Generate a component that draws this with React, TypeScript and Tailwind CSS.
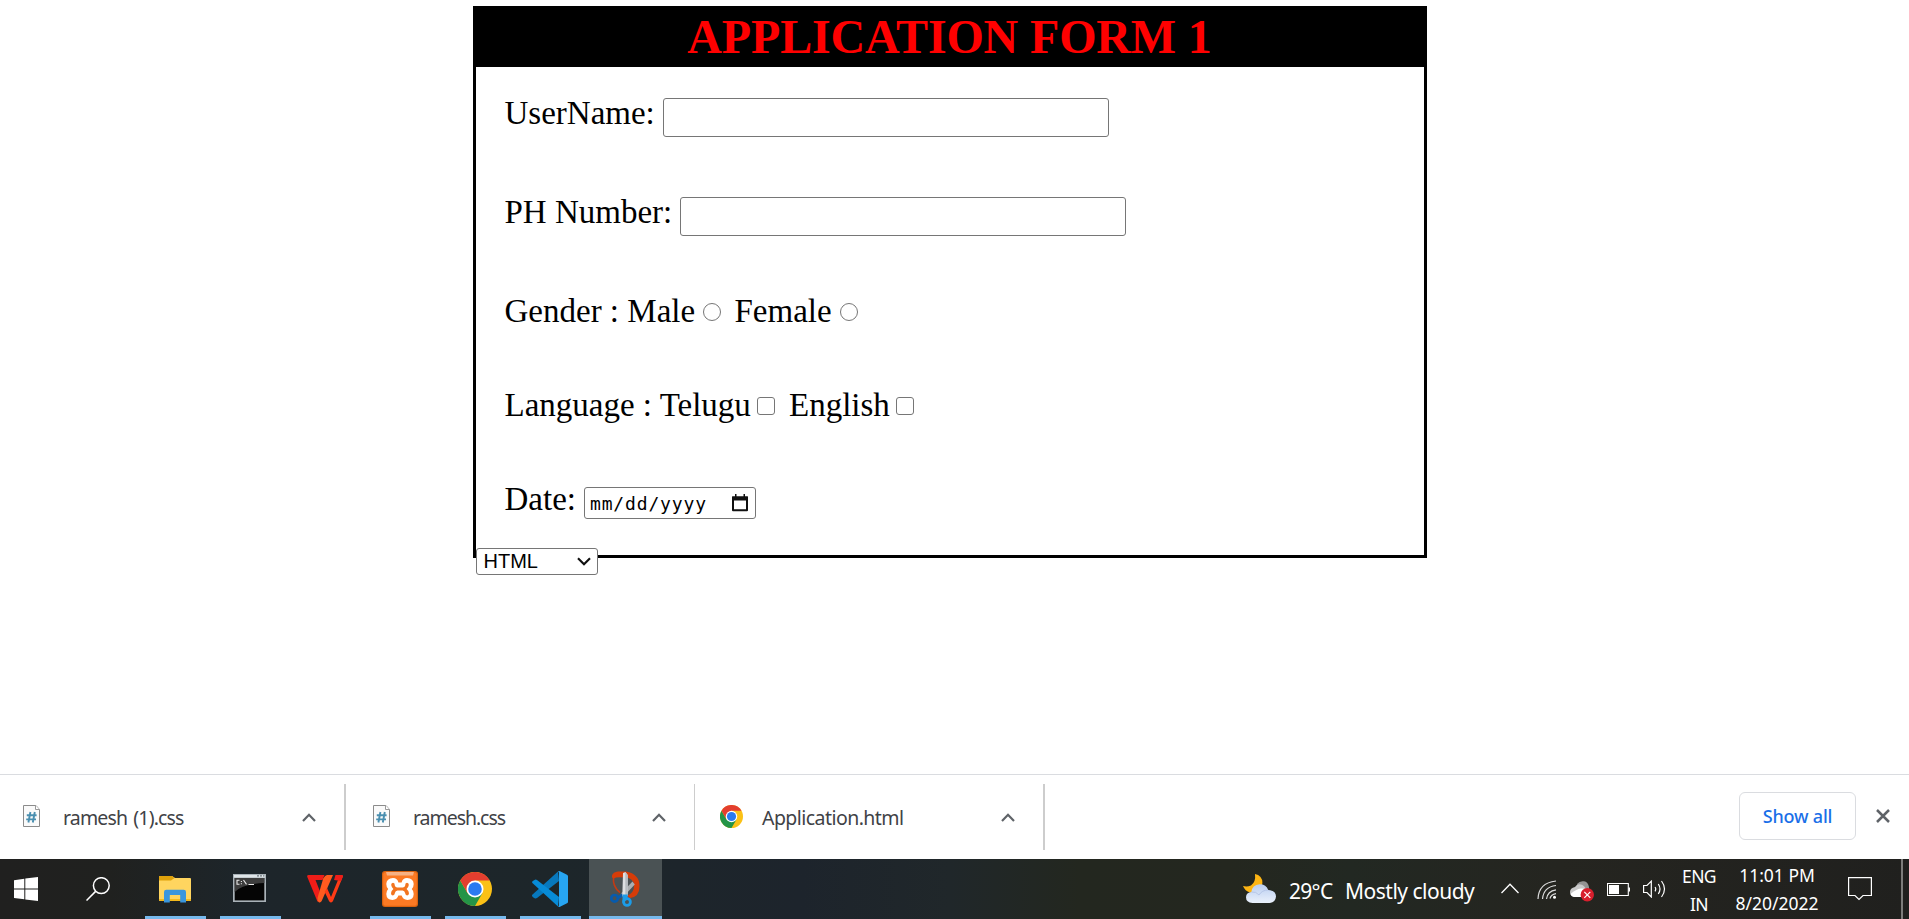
import type { ReactNode } from "react";

function ChromeLogo({ className }: { className: string }) {
  return (
    <svg viewBox="0 0 48 48" className={className}>
      <circle cx="24" cy="24" r="24" fill="#fbc116" />
      <path d="M3.2 12A24 24 0 0 0 24 48L34.4 30H13.6Z" fill="#249447" />
      <path d="M3.2 12A24 24 0 0 1 44.8 12H24L13.6 30Z" fill="#e33e2f" />
      <circle cx="24" cy="24" r="12" fill="#fff" />
      <circle cx="24" cy="24" r="9.6" fill="#2a7af0" />
    </svg>
  );
}

function CssFileIcon() {
  return (
    <svg viewBox="0 0 17 22" className="h-[22px] w-[17px]">
      <path d="M.5.5H13L16.5 4.5V21.5H.5Z" fill="#fafafa" stroke="#8b8b8b" />
      <path d="M12.5.5V4.5H16.5" fill="#fff" stroke="#9a9a9a" />
      <path d="M7.4 7L5.4 17.5M11.8 7L9.8 17.5M3.8 10.2H13.6M3.2 14.4H13" stroke="#4a8fb0" strokeWidth="1.9" fill="none" />
    </svg>
  );
}

function Download({ icon, name, width, spacing }: { icon: ReactNode; name: string; width: string; spacing: string }) {
  return (
    <div className={`flex h-[66px] items-start border-[#cdcdcd] ${width}`}>
      <div className="mt-[21px] flex w-[40px] shrink-0">{icon}</div>
      <span className={`mt-[20px] grow whitespace-nowrap font-['Noto_Sans',sans-serif] text-[19.5px] leading-[28px] text-[#3f4246] ${spacing}`}>{name}</span>
      <svg viewBox="0 0 14 9" className="mt-[29px] mr-[28px] h-[9px] w-[14px] shrink-0">
        <path d="M1 8L7 1.8L13 8" fill="none" stroke="#5f6368" strokeWidth="2.2" />
      </svg>
    </div>
  );
}

function TaskCell({ children, open }: { children: ReactNode; open?: boolean }) {
  return (
    <div className="flex h-[60px] w-[75px] flex-col items-center justify-between">
      <div className="flex h-[57px] items-center pr-[2px]">{children}</div>
      {open && <div className="h-[3px] w-[61px] bg-[#76b9ed]" />}
    </div>
  );
}

function TextField({ className }: { className: string }) {
  return <input type="text" className={`h-[39px] w-[446px] rounded-[3px] border border-[#767676] bg-white ${className}`} />;
}

export default function App() {
  return (
    <div className="flex h-[919px] w-[1909px] flex-col overflow-hidden bg-white text-black">
      <main className="h-[774px] pt-[6px] pl-[473px]">
        <form className="h-[552px] w-[954px] border-[3px] border-black font-['Liberation_Serif',serif] text-[33px] leading-[40px]">
          <h1 className="flex h-[58px] justify-center bg-black pr-[1px] text-[48px] leading-[55px] font-bold tracking-[-0.15px] whitespace-nowrap text-[#ff0000]">
            APPLICATION FORM 1
          </h1>
          <div className="flex flex-col pt-[26px] pl-[28.5px]">
            <div className="flex h-[99px] items-start">
              <span className="w-[158.5px]">UserName:</span>
              <TextField className="mt-[5px]" />
            </div>
            <div className="flex h-[99px] items-start">
              <span className="w-[175.5px] whitespace-nowrap">PH Number:</span>
              <TextField className="mt-[5px]" />
            </div>
            <div className="flex h-[94px] items-start">
              <span className="w-[198.5px] whitespace-pre">Gender : Male</span>
              <input type="radio" name="gender" className="mt-[12px] h-[18px] w-[18px] appearance-none rounded-full border-[1.5px] border-[#767676]" />
              <span className="ml-[13.5px] w-[105.5px]">Female</span>
              <input type="radio" name="gender" className="mt-[12px] h-[18px] w-[18px] appearance-none rounded-full border-[1.5px] border-[#767676]" />
            </div>
            <div className="flex h-[94px] items-start">
              <span className="w-[252.5px] whitespace-pre">Language : Telugu</span>
              <input type="checkbox" className="mt-[12px] h-[18px] w-[18px] appearance-none rounded-[3px] border-[1.5px] border-[#767676]" />
              <span className="ml-[14px] w-[107px]">English</span>
              <input type="checkbox" className="mt-[12px] h-[18px] w-[18px] appearance-none rounded-[3px] border-[1.5px] border-[#767676]" />
            </div>
            <div className="flex items-start">
              <span className="w-[79.5px]">Date:</span>
              <div className="mt-[8px] flex h-[32px] w-[172px] items-center justify-between rounded-[3px] border border-[#767676] pr-[7px] pl-[5px]">
                <span className="pt-[1px] font-['DejaVu_Sans_Mono',monospace] text-[18px] leading-[30px] tracking-[0.85px]">mm/dd/yyyy</span>
                <svg viewBox="0 0 16 18" className="mb-[1px] h-[18px] w-[16px]">
                  <path d="M1 3.5H15V16.2H1Z" fill="none" stroke="#111" strokeWidth="2" strokeLinejoin="round" />
                  <path d="M0 2.5H16V6.5H0ZM3 0H4.5V3H3ZM11.5 0H13V3H11.5Z" fill="#111" />
                </svg>
              </div>
            </div>
          </div>
        </form>
        <div className="relative mt-[-10px] ml-[3px] flex h-[27px] w-[122px] items-center justify-between rounded-[3px] border border-[#767676] bg-white pr-[6px] pl-[6.5px]">
          <span className="font-['Liberation_Sans',sans-serif] text-[20px] leading-[25px]">HTML</span>
          <svg viewBox="0 0 14 9" className="h-[9px] w-[14px]">
            <path d="M1 1.3L7 7.2L13 1.3" fill="none" stroke="#111" strokeWidth="2.2" />
          </svg>
        </div>
      </main>

      <section className="flex h-[85px] border-t border-[#dadce0] pt-[9px]">
        <Download icon={<CssFileIcon />} name="ramesh (1).css" width="w-[346px] border-r-2 pl-[23px]" spacing="tracking-[-0.85px] [word-spacing:2px]" />
        <Download icon={<CssFileIcon />} name="ramesh.css" width="w-[349px] border-r pl-[27px]" spacing="tracking-[-1.05px]" />
        <Download icon={<ChromeLogo className="ml-[0.5px] h-[23px] w-[23px]" />} name="Application.html" width="w-[350px] border-r-2 pl-[24px]" spacing="pl-[3px] tracking-[-0.55px]" />
        <button className="mt-[8px] ml-[694px] h-[48px] w-[117px] rounded-[6px] border border-[#dadce0] font-['Noto_Sans',sans-serif] text-[18px] leading-[46px] font-medium tracking-[-0.2px] whitespace-nowrap text-[#1a6fe8]">
          Show all
        </button>
        <svg viewBox="0 0 14 14" className="mt-[25px] ml-[20px] h-[14px] w-[14px]">
          <path d="M1 1L13 13M13 1L1 13" stroke="#5f6368" strokeWidth="2.5" />
        </svg>
      </section>

      <footer className="flex h-[60px] bg-[linear-gradient(90deg,#20201f_0px,#20211f_110px,#1d252a_240px,#1d262a_560px,#1d242c_800px,#20272a_950px,#23271f_1080px,#24271f_1230px,#222822_1350px,#252520_1560px,#20201e_1909px)] font-['Noto_Sans',sans-serif] text-white">
        <div className="flex w-[58px] pt-[18px] pl-[14px]">
          <svg viewBox="0 0 24 24" className="h-[24px] w-[24px]" fill="#fff">
            <path d="M0 3.2L10.3 1.8V11.4H0ZM11.3 1.6L24 0V11.4H11.3ZM0 12.5H10.3V22.3L0 21ZM11.3 12.5H24V24L11.3 22.4Z" />
          </svg>
        </div>
        <div className="flex w-[80px] justify-center pt-[18px]">
          <svg viewBox="0 0 24 24" className="h-[24px] w-[24px]" fill="none" stroke="#fff" strokeWidth="1.5">
            <circle cx="15.3" cy="8.6" r="7.9" />
            <path d="M9.6 14.4L.5 23.5" />
          </svg>
        </div>
        <TaskCell open>
          <svg viewBox="0 0 32 27" className="mt-[3px] h-[27px] w-[32px]">
            <path d="M0 1Q0 0 1 0H13L16 2H31Q32 2 32 3V24Q32 25 31 25H1Q0 25 0 24Z" fill="#ffd55f" />
            <path d="M0 1Q0 0 1 0H13L15.5 2L12 4.5H0Z" fill="#dfa20b" />
            <path d="M0 23H32V24Q32 25 31 25H1Q0 25 0 24Z" fill="#f3b91c" />
            <path d="M5 26.5V16Q5 13.7 7.3 13.7H24.7Q27 13.7 27 16V26.5H21.2V19H10.8V26.5Z" fill="#3a96dd" />
          </svg>
        </TaskCell>
        <TaskCell open>
          <svg viewBox="0 0 33 28" className="mt-[1px] h-[28px] w-[33px]">
            <rect width="33" height="28" fill="#a9b2b8" />
            <rect x="1" y="1" width="31" height="2.5" fill="#dfe5e8" />
            <path d="M24 1.2H26V2.4H24ZM27 1.2H29V2.4H27ZM30 1.2H31.5V2.4H30Z" fill="#6d777d" />
            <rect x="1.7" y="4" width="29.6" height="22.4" fill="#050505" />
            <path d="M1.7 4H31.3V9Q9 10 1.7 18Z" fill="#3c3c3c" />
            <path d="M6.5 6.3H4V10.2H6.5M8.4 7V8M8.4 9.3V10.2M10.5 6L13.5 10.4M15.5 10.5H21" stroke="#e8e8e8" strokeWidth="1.1" fill="none" />
          </svg>
        </TaskCell>
        <TaskCell>
          <svg viewBox="0 0 36 28" className="mt-[3px] h-[28px] w-[36px]">
            <path d="M1.5 0H17.5L15.5 5H8.5L12.8 16L11.2 27Q10.5 26.6 10 25.5L.3 2Q-.2 0 1.5 0Z" fill="#ee1d18" />
            <path d="M16.2 3.5Q18 0 20 0H26L14.7 26Q13.7 28 11.8 27.3Q10.2 26 10.5 23Z" fill="#ff5b1f" />
            <path d="M20 13L24 22L31 5H28L30 0H34.5Q36.4 0 35.7 2L26 26Q25 28 23.3 27.3Q22.5 27 22 26L17.7 17Z" fill="#ff3b16" />
            <path d="M27 5L28.5 0H34.5Q36.4 0 35.7 2L34 6Z" fill="#ee1d18" />
          </svg>
        </TaskCell>
        <TaskCell open>
          <svg viewBox="0 0 36 36" className="mt-[3px] h-[36px] w-[36px]">
            <rect width="36" height="36" rx="3" fill="#d9620f" />
            <rect x="1.2" y="1.2" width="33.6" height="33.6" rx="2" fill="#fb7a24" />
            <path d="M4 1H32L31 4.5H5Z" fill="#f6b183" />
            <path d="M11 7Q15.5 7 16.4 11.5H19.6Q20.5 7 25 7Q31.5 7.3 31.7 13Q31.7 16 29.8 18Q31.8 20 31.7 23Q31.5 28.8 25.5 29Q20.8 28.8 19.6 24.6H16.4Q15.2 28.8 10.5 29Q4.5 28.8 4.3 23Q4.3 20 6.2 18Q4.3 16 4.3 13Q4.5 7.3 11 7Z" fill="#fff" />
            <path d="M11 11.8Q13 12 12.8 14.6Q13 16.3 15 16.5H21Q23 16.3 23.2 14.6Q23 12 25 11.8Q27 12 26.8 14Q26.6 16 24.6 18Q27 20 27 22.2Q26.8 24.4 25 24.4Q23.2 24.2 23 21.8Q22.6 19.8 20.6 19.6H15.4Q13.4 19.8 13 21.8Q12.8 24.2 11 24.4Q9 24.4 9 22.2Q9 20 11.4 18Q9.4 16 9.2 14Q9 12 11 11.8Z" fill="#f2741f" />
          </svg>
        </TaskCell>
        <TaskCell open>
          <ChromeLogo className="mt-[3px] h-[34px] w-[34px]" />
        </TaskCell>
        <TaskCell open>
          <svg viewBox="0 0 36 36" className="mt-[3px] h-[36px] w-[36px]">
            <path d="M26 .5L0 24Q-.3 25.2 1 26.2L3 27.4Q4 27.7 5 27L27 10Z" fill="#0778bd" />
            <path d="M26 35.5L.4 12Q-.3 11 .8 10L3 8.7Q4 8.3 5 9L27 26Z" fill="#078bd7" />
            <path d="M26 .3Q27 -.2 28 .3L35 3.7Q36 4.3 36 5.3V30.7Q36 31.7 35 32.3L28 35.7Q27 36.2 26 35.6Q27 35.2 27 34V2Q27 .8 26 .3Z" fill="#27a5f2" />
          </svg>
        </TaskCell>
        <div className="ml-[1px] flex h-[60px] w-[73px] flex-col items-center justify-between bg-[#4a5254]">
          <svg viewBox="0 0 30 36" className="mt-[12px] mr-[1px] h-[36px] w-[30px]">
            <path d="M3.5 6Q2.5 16 10 21.5" fill="none" stroke="#c43a12" strokeWidth="1.6" />
            <path d="M2 4.5Q3 1 8 .5H16Q29.5 3 29.5 15Q29.5 26 20 27L16.5 25Q24.5 22 24 14Q23 6.5 15 6.5Q6 5.5 4 7.5Q1.5 7 2 4.5Z" fill="#d63c08" />
            <path d="M22.5 10.5L24.8 13.5L14 25L9 27L12 21.5Z" fill="#aaaeb0" />
            <path d="M13 2L15.5 1L17.7 4V25H12.5V18Z" fill="#dde0e2" />
            <path d="M15.3 1L17.7 4V25H15.3Z" fill="#b7bcc0" />
            <circle cx="4.6" cy="27.3" r="3.3" fill="none" stroke="#075bad" strokeWidth="2.7" />
            <path d="M7 25.5L12 22.5L12.5 26L8.5 28Z" fill="#075bad" />
            <circle cx="17" cy="31" r="3.4" fill="none" stroke="#1c9ce8" strokeWidth="2.8" />
            <path d="M12.5 23.5H17.7V28.5L14 30.5L12.5 32Z" fill="#1c9ce8" />
          </svg>
          <div className="h-[3px] w-[73px] bg-[#76b9ed]" />
        </div>

        <div className="ml-[581px] flex w-[258px] shrink-0 items-start">
          <svg viewBox="0 0 33 30" className="mt-[15px] h-[30px] w-[33px] shrink-0">
            <defs>
              <linearGradient id="cloud" x1="0" y1="0" x2="0" y2="1">
                <stop offset="0" stopColor="#b9cdf0" />
                <stop offset="1" stopColor="#eaf1fb" />
              </linearGradient>
            </defs>
            <path d="M12 0Q13 8 8 11.5Q4 13 0 12Q2 17 7 18.5Q13 19.5 17 15Q21.5 8 17.5 3Q15.5.5 12 0Z" fill="#fdb514" />
            <path d="M9.5 29Q3 28.5 3 23.2Q3.2 18.3 8.4 18Q9 10.8 16.7 10.2Q23.3 10.2 25.2 16Q33 16.3 33 22.5Q32.5 28.7 26.5 29Z" fill="url(#cloud)" />
            <path d="M8.4 18Q13 17.3 16 21Q19 16 25.2 16" fill="none" stroke="#aebfe3" strokeWidth=".8" />
          </svg>
          <span className="mt-[16px] ml-[13px] w-[56px] shrink-0 text-[21px] leading-[32px] tracking-[-0.7px] whitespace-nowrap">29°C</span>
          <span className="mt-[16px] text-[21px] leading-[32px] tracking-[-0.5px] whitespace-nowrap">Mostly cloudy</span>
        </div>
        <div className="flex w-[182px] shrink-0 items-start">
          <svg viewBox="0 0 18 11" className="mt-[24px] h-[11px] w-[18px]">
            <path d="M.5 10L9 1.3L17.5 10" fill="none" stroke="#fff" strokeWidth="1.3" />
          </svg>
          <svg viewBox="0 0 20 20" className="mt-[21px] ml-[18px] h-[20px] w-[20px]" fill="none" stroke="#ddd" strokeWidth="1.2">
            <path d="M1 19Q1.5 3 19 1" />
            <path d="M5.5 19Q6.5 7 19 5.5" />
            <path d="M9.5 19Q10.5 11 19 9.8" />
            <path d="M13 18.5Q14 14.5 19 13.7" />
            <circle cx="17.5" cy="17.3" r="1.5" fill="#fff" stroke="none" />
          </svg>
          <svg viewBox="0 0 24 21" className="mt-[22px] ml-[13px] h-[21px] w-[24px]">
            <path d="M7 3Q10-.5 14 .3Q18 1 19 6V13H9Z" fill="#939393" />
            <path d="M4 16Q0 15 0 11Q0 7 5 6Q7 2.5 11 3.5Q14 4 16 8L8 16Z" fill="#c9c9c9" />
            <path d="M4 16Q1 15.5 .5 13Q6 8 11 7.5Q16 7 20 10V16Z" fill="#fff" />
            <circle cx="17.3" cy="13.8" r="6.7" fill="#d81f2d" />
            <path d="M14.3 10.8L20.3 16.8M20.3 10.8L14.3 16.8" stroke="#fff" strokeWidth="1.2" />
          </svg>
          <svg viewBox="0 0 23 13" className="mt-[24px] ml-[13px] h-[13px] w-[23px]">
            <path d="M.5.5H21.3V12.5H.5Z" fill="none" stroke="#fff" strokeWidth="1.1" />
            <path d="M2 2H12V11H2ZM21.5 4.5H23V8.5H21.5Z" fill="#fff" />
          </svg>
          <svg viewBox="0 0 23 18" className="mt-[21px] ml-[13px] h-[18px] w-[23px]" fill="none" stroke="#fff" strokeWidth="1.2">
            <path d="M.6 5.5H4L8.3 1.2V17L4 12.5H.6Z" />
            <path d="M12 7Q13.5 9 12 11.3M15.3 4Q18.7 9 15.3 14M18.5 1Q24.5 9 18.5 17" />
          </svg>
        </div>
        <div className="flex w-[32px] shrink-0 flex-col items-center text-[17.5px] leading-[28px] tracking-[-0.6px] whitespace-nowrap">
          <span className="mt-[3px]">ENG</span>
          <span>IN</span>
        </div>
        <div className="ml-[20px] flex w-[84px] shrink-0 flex-col items-center text-[17.5px] leading-[28px] tracking-[0px] whitespace-nowrap">
          <span className="mt-[2px]">11:01 PM</span>
          <span>8/20/2022</span>
        </div>
        <svg viewBox="0 0 24 24" className="mt-[18px] ml-[29px] h-[24px] w-[24px] shrink-0">
          <path d="M.6.6H23.4V18.5H15L11 22.5L7 18.5H.6Z" fill="none" stroke="#fff" strokeWidth="1.2" />
        </svg>
        <div className="ml-[29px] h-[60px] w-[2px] shrink-0 bg-[#7d7d7b]" />
      </footer>
    </div>
  );
}
